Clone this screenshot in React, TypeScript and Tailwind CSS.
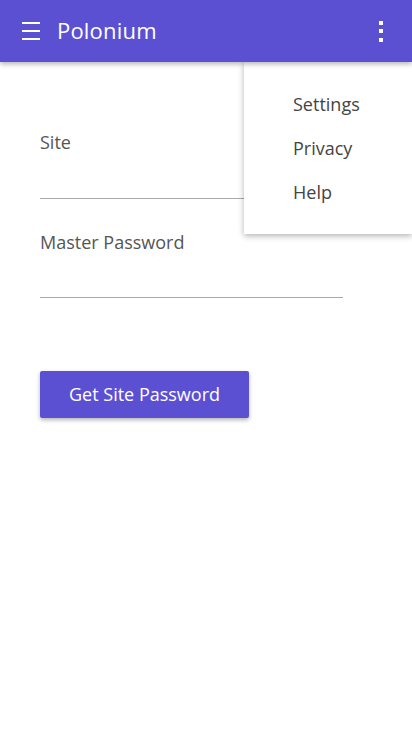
import { useState } from "react";

const menuItems = ["Settings", "Privacy", "Help"];

export default function App() {
  const [site, setSite] = useState("");
  const [master, setMaster] = useState("");

  return (
    <div className="relative w-[412px] h-[732px] bg-white overflow-hidden" style={{ fontFamily: '"Open Sans", "Noto Sans", sans-serif' }}>
      <header className="h-[62px] bg-[#5c50d2] flex items-center pl-[22px] pr-[29px] shadow-[0_2px_5px_rgba(0,0,0,0.3)] relative z-10">
        <div className="w-[35px] flex flex-col gap-[6px]">
          <span className="block w-[18px] h-[2px] bg-white" />
          <span className="block w-[18px] h-[2px] bg-white" />
          <span className="block w-[18px] h-[2px] bg-white" />
        </div>
        <h1 className="text-white text-[22px] tracking-[0.2px] -mt-[1px]">Polonium</h1>
        <div className="ml-auto flex flex-col gap-[4.5px] items-center">
          <span className="w-[4px] h-[4px] bg-white" />
          <span className="w-[4px] h-[4px] bg-white" />
          <span className="w-[4px] h-[4px] bg-white" />
        </div>
      </header>

      <main className="px-[40px] pt-[68px] w-[383px]">
        <label className="block">
          <span className="block text-[18px] text-[#555] leading-[24px]">Site</span>
          <input
            value={site}
            onChange={(e) => setSite(e.target.value)}
            className="w-full h-[45px] border-b border-[#aaa] outline-none text-[18px]"
          />
        </label>
        <label className="block mt-[31px]">
          <span className="block text-[18px] text-[#555] leading-[24px]">Master Password</span>
          <input
            type="password"
            value={master}
            onChange={(e) => setMaster(e.target.value)}
            className="w-full h-[44px] border-b border-[#aaa] outline-none text-[18px]"
          />
        </label>
        <button className="mt-[73px] w-[209px] h-[47px] bg-[#5c50d2] text-white text-[18px] rounded-[2px] shadow-[0_2px_4px_rgba(0,0,0,0.3)]">
          Get Site Password
        </button>
      </main>

      <div className="absolute left-[244px] top-[62px] w-[168px] h-[172px] bg-white shadow-[0_2px_6px_rgba(0,0,0,0.3)] pt-[27px] pl-[49px] z-0">
        {menuItems.map((item) => (
          <div key={item} className="h-[44px] text-[18px] text-[#444] leading-[30px]">
            {item}
          </div>
        ))}
      </div>
    </div>
  );
}
